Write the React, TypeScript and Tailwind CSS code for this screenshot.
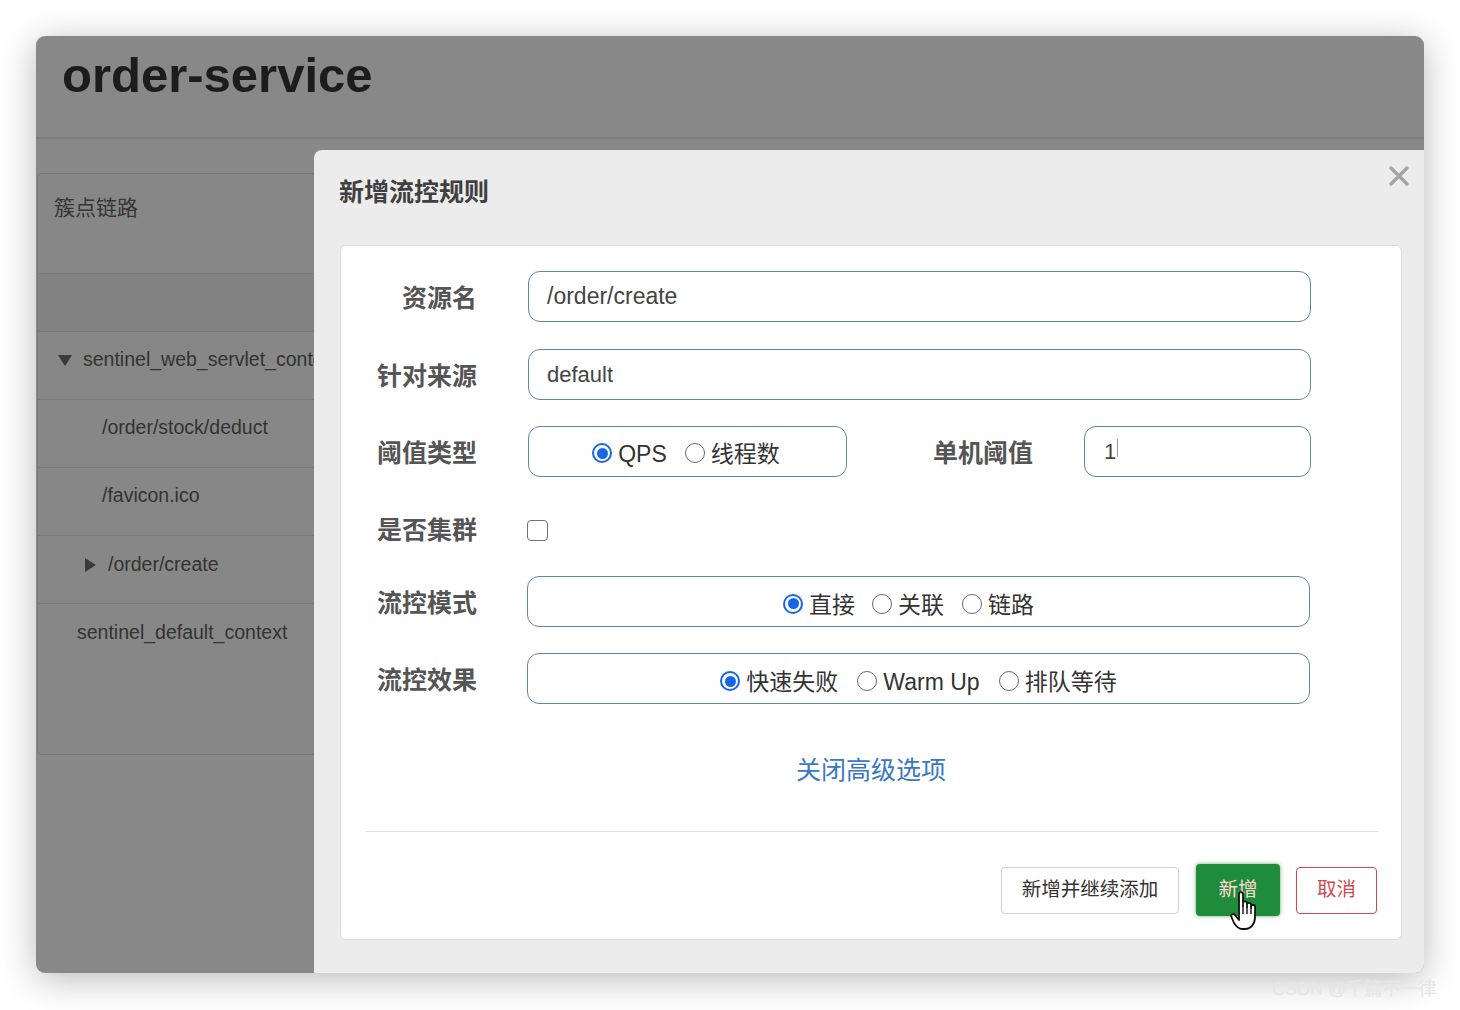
import React from "react";

const F = { fontFamily: '"Liberation Sans", "Noto Sans CJK SC", sans-serif' };

function Radio({ checked }: { checked?: boolean }) {
  return checked ? (
    <span className="w-[20px] h-[20px] rounded-full border-2 border-[#1766e8] flex items-center justify-center bg-white shrink-0">
      <span className="w-[11px] h-[11px] rounded-full bg-[#1766e8]" />
    </span>
  ) : (
    <span className="w-[20px] h-[20px] rounded-full border-[1.5px] border-[#6a6a6a] bg-white shrink-0" />
  );
}

function RadioItem({ label, checked, ml }: { label: string; checked?: boolean; ml?: string }) {
  return (
    <span className={"flex items-center " + (ml || "")}>
      <Radio checked={checked} />
      <span className="ml-[6px] text-[23px] text-[#333] leading-none mt-[3px]">{label}</span>
    </span>
  );
}

function Label({ children, w = "w-[136px]" }: { children: React.ReactNode; w?: string }) {
  return (
    <div className={w + " shrink-0 text-right text-[25px] font-bold text-[#555] leading-none mt-[3px]"}>{children}</div>
  );
}

const boxCls = "h-[51px] rounded-[12px] border-[1.5px] border-[#5f86b0] bg-white";

function Tri({ down }: { down?: boolean }) {
  return down ? (
    <svg width="14" height="12" viewBox="0 0 14 12" className="shrink-0">
      <path d="M0 1 L14 1 L7 12 Z" fill="#3a3a3a" />
    </svg>
  ) : (
    <svg width="12" height="14" viewBox="0 0 12 14" className="shrink-0">
      <path d="M1 0 L12 7 L1 14 Z" fill="#3a3a3a" />
    </svg>
  );
}

export default function App() {
  return (
    <div className="w-[1460px] h-[1010px] bg-white relative overflow-hidden p-[36px]" style={F}>
      <div className="relative w-[1388px] h-[937px] rounded-[9px] overflow-hidden bg-[#888888] shadow-[0_6px_36px_rgba(0,0,0,0.28)]">
        {/* header */}
        <div className="h-[103px] border-b-2 border-[#7c7c7c] px-[26px] pt-[11px]">
          <div className="text-[49px] font-bold text-[#1c1c1c] leading-[56px]">order-service</div>
        </div>
        {/* body */}
        <div className="pt-[34px] pl-[1px]">
          <div className="w-[420px] h-[582px] border border-[#7a7a7a] rounded-[4px] bg-[#878787] flex flex-col">
            <div className="h-[100px] border-b border-[#7a7a7a] px-[16px] pt-[20px]">
              <div className="text-[21px] text-[#353535] leading-[28px]">簇点链路</div>
            </div>
            <div className="h-[58px] border-b border-[#7a7a7a] bg-[#828282]" />
            <div className="h-[68px] border-b border-[#7a7a7a] flex items-center pl-[20px] text-[19.5px] text-[#333] pb-[11px]">
              <Tri down />
              <span className="ml-[11px]">sentinel_web_servlet_context</span>
            </div>
            <div className="h-[68px] border-b border-[#7a7a7a] flex items-center pl-[64px] text-[19.5px] text-[#333] pb-[11px]">
              /order/stock/deduct
            </div>
            <div className="h-[68px] border-b border-[#7a7a7a] flex items-center pl-[64px] text-[19.5px] text-[#333] pb-[11px]">
              /favicon.ico
            </div>
            <div className="h-[68px] border-b border-[#7a7a7a] flex items-center pl-[46px] text-[19.5px] text-[#333] pb-[10px]">
              <Tri />
              <span className="ml-[12px]">/order/create</span>
            </div>
            <div className="flex-1 pl-[39px] pt-[15px] text-[19.5px] text-[#333] leading-[26px]">sentinel_default_context</div>
          </div>
        </div>

        {/* modal */}
        <div className="absolute left-[278px] top-[114px] right-0 bottom-0 bg-[#ececec] rounded-tl-[8px] flex flex-col">
          <div className="h-[95px] relative pl-[25px] pt-[26px]">
            <div className="text-[25px] font-bold text-[#404040] leading-[32px]">新增流控规则</div>
            <svg className="absolute right-[15px] top-[16px]" width="20" height="20" viewBox="0 0 20 20">
              <path d="M2 2 L18 18 M18 2 L2 18" stroke="#a3a3a3" strokeWidth="3.2" strokeLinecap="round" />
            </svg>
          </div>
          <div className="ml-[26px] mr-[22px] h-[695px] bg-white border border-[#dcdcdc] rounded-[6px] flex flex-col">
            {/* 资源名 */}
            <div className="flex items-center mt-[25px]">
              <Label>资源名</Label>
              <div className={boxCls + " ml-[51px] w-[783px] flex items-center px-[18px]"}>
                <span className="text-[23px] text-[#444]">/order/create</span>
              </div>
            </div>
            {/* 针对来源 */}
            <div className="flex items-center mt-[27px]">
              <Label>针对来源</Label>
              <div className={boxCls + " ml-[51px] w-[783px] flex items-center px-[18px]"}>
                <span className="text-[22px] text-[#444]">default</span>
              </div>
            </div>
            {/* 阈值类型 */}
            <div className="flex items-center mt-[26px]">
              <Label>阈值类型</Label>
              <div className={boxCls + " ml-[51px] w-[319px] flex items-center justify-center pt-[3px] pr-[3px]"}>
                <RadioItem label="QPS" checked />
                <RadioItem label="线程数" ml="ml-[18px]" />
              </div>
              <Label w="w-[186px]">单机阈值</Label>
              <div className={boxCls + " ml-[51px] w-[227px] flex items-center px-[19px]"}>
                <span className="text-[22px] text-[#444]">1</span>
                <span className="w-px h-[18px] bg-[#999] ml-[1px] -mt-[8px]" />
              </div>
            </div>
            {/* 是否集群 */}
            <div className="flex items-center mt-[26px] h-[51px]">
              <Label>是否集群</Label>
              <span className="ml-[50px] mt-[4px] w-[21px] h-[21px] rounded-[4px] border-[1.5px] border-[#707070] bg-white" />
            </div>
            {/* 流控模式 */}
            <div className="flex items-center mt-[22px]">
              <Label>流控模式</Label>
              <div className={boxCls + " ml-[50px] w-[783px] flex items-center justify-center pr-[20px] pt-[4px]"}>
                <RadioItem label="直接" checked />
                <RadioItem label="关联" ml="ml-[17px]" />
                <RadioItem label="链路" ml="ml-[18px]" />
              </div>
            </div>
            {/* 流控效果 */}
            <div className="flex items-center mt-[26px]">
              <Label>流控效果</Label>
              <div className={boxCls + " ml-[50px] w-[783px] flex items-center justify-center pt-[5px]"}>
                <RadioItem label="快速失败" checked />
                <RadioItem label="Warm Up" ml="ml-[19px]" />
                <RadioItem label="排队等待" ml="ml-[19px]" />
              </div>
            </div>
            {/* link */}
            <div className="mt-[50px] text-center">
              <span className="text-[25px] text-[#3a78c2] leading-[32px]">关闭高级选项</span>
            </div>
            <div className="mt-[45px] ml-[25px] mr-[23px] h-px bg-[#e2e2e2]" />
            <div className="flex justify-end items-center mt-[32px] mr-[24px]">
              <div className="w-[178px] h-[47px] border border-[#cfcfcf] rounded-[4px] flex items-center justify-center text-[19.5px] text-[#333] bg-white">
                新增并继续添加
              </div>
              <div className="relative ml-[17px] w-[84px] h-[52px] rounded-[4px] bg-[#1f8c3b] flex items-center justify-center text-[19.5px] text-[#ffd9d4] shadow-[0_0_4px_rgba(20,120,40,0.6)]">
                新增
                <svg className="absolute left-[34px] top-[26px]" width="30" height="42" viewBox="0 0 30 42">
                  <path
                    d="M9 4 C9 1.5 13 1.5 13 4 L13 16 L13 13 C13 10.8 17 10.8 17 13 L17 17 L17 14.5 C17 12.3 21 12.3 21 14.5 L21 18 L21 16.5 C21 14.5 25 14.5 25 16.5 L25 27 C25 34 21 39 15 39 L12 39 C8 39 6 36 4 33 L1.5 27 C0.5 24.5 3.5 23 5 25 L9 30 Z"
                    fill="#fff"
                    stroke="#111"
                    strokeWidth="1.8"
                    strokeLinejoin="round"
                  />
                  <path d="M13 16 L13 24 M17 17 L17 24 M21 18 L21 24" stroke="#111" strokeWidth="1.4" />
                </svg>
              </div>
              <div className="ml-[16px] w-[81px] h-[47px] border border-[#d2484a] rounded-[4px] flex items-center justify-center text-[19.5px] text-[#d14a4e] bg-white">
                取消
              </div>
            </div>
          </div>
        </div>
      </div>
      <div className="absolute left-[1272px] top-[977px] text-[18px] text-[#e6e6e6] leading-[24px] whitespace-nowrap">
        CSDN @千篇不一律
      </div>
    </div>
  );
}
